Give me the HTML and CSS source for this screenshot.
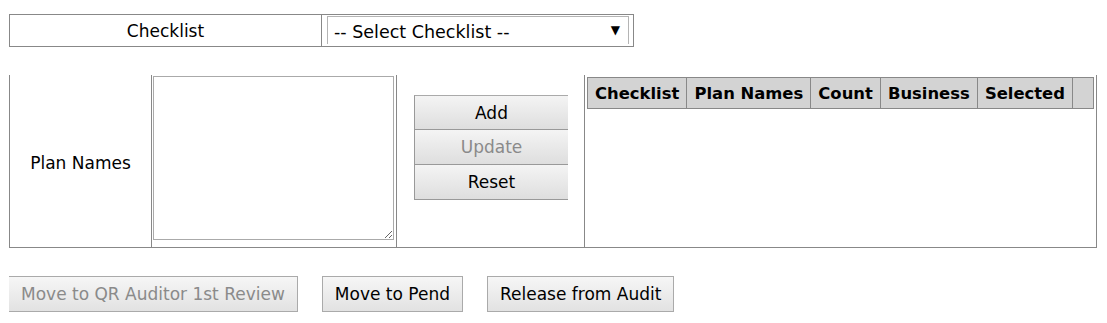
FILE: index.html
```
<!DOCTYPE html>
<html lang="en">
<head>
  <meta charset="UTF-8" />
  <title>Checklist Audit</title>
  <link rel="stylesheet" href="styles.css">
</head>
<body>

  <table class="pick-table">
    <tr>
      <td class="pick-label">Checklist</td>
      <td class="pick-field">
        <div class="select-wrap">
          <select class="checklist-select">
            <option>-- Select Checklist --</option>
          </select>
        </div>
      </td>
    </tr>
  </table>

  <div class="plan-panel">
    <div class="plan-label">Plan Names</div>
    <div class="plan-input">
      <textarea class="plan-text"></textarea>
    </div>
    <div class="plan-actions">
      <button class="stack-btn">Add</button>
      <button class="stack-btn" disabled>Update</button>
      <button class="stack-btn">Reset</button>
    </div>
    <div class="plan-grid">
      <table class="grid-table">
        <tr>
          <th>Checklist</th>
          <th>Plan Names</th>
          <th>Count</th>
          <th>Business</th>
          <th>Selected</th>
          <th class="spacer"></th>
        </tr>
      </table>
    </div>
  </div>

  <div class="footer-actions">
    <button class="action-btn" disabled>Move to QR Auditor 1st Review</button>
    <button class="action-btn">Move to Pend</button>
    <button class="action-btn">Release from Audit</button>
  </div>

</body>
</html>
```

FILE: styles.css
```
body {
  margin: 14px 9px 8px 9px;
  font-family: "DejaVu Sans", Verdana, sans-serif;
  font-size: 17px;
  color: #000;
  background: #fff;
}

.pick-table {
  border-collapse: collapse;
  width: 625px;
}

.pick-table td {
  border: 1px solid #888;
  height: 29px;
  padding: 0;
}

.pick-label {
  width: 311px;
  text-align: center;
  line-height: 27px;
  padding-top: 2px !important;
}

.pick-field {
  padding: 0 4px 0 5px !important;
  vertical-align: top;
}

.select-wrap {
  position: relative;
  margin-top: 1px;
  height: 28px;
}

.select-wrap::after {
  content: "\25BC";
  position: absolute;
  right: 9px;
  top: 7px;
  font-size: 12px;
  line-height: 14px;
  pointer-events: none;
}

.checklist-select {
  appearance: none;
  -webkit-appearance: none;
  display: block;
  width: 302px;
  height: 28px;
  border: 1px solid #b4b4b4;
  border-bottom: none;
  border-radius: 0;
  background: #fff;
  font-family: inherit;
  font-size: 17.5px;
  padding: 2px 0 0 6px;
  color: #000;
}

.plan-panel {
  display: grid;
  grid-template-columns: 142px 245px 188px 513px;
  margin-top: 28px;
  width: 1088px;
  height: 173px;
  border-left: 1px solid #888;
  border-right: 1px solid #888;
  border-bottom: 1px solid #888;
  box-sizing: border-box;
}

.plan-label {
  display: flex;
  align-items: center;
  justify-content: center;
  padding-top: 4px;
  border-right: 1px solid #888;
}

.plan-input {
  border-right: 1px solid #888;
  padding: 1px 0 0 1px;
}

.plan-text {
  display: block;
  width: 241px;
  height: 164px;
  box-sizing: border-box;
  border: 1px solid #aaa;
  margin: 0;
  resize: both;
}

.plan-actions {
  display: flex;
  flex-direction: column;
  padding: 20px 0 0 17px;
  border-right: 1px solid #888;
}

.stack-btn {
  width: 154px;
  height: 35px;
  margin: 0;
  font-family: inherit;
  font-size: 17px;
  color: #000;
  border: 1px solid #999;
  border-right: none;
  border-top-color: #aaa;
  background: linear-gradient(#f4f4f4, #dedede);
  border-radius: 0;
  padding: 0;
}

.stack-btn + .stack-btn {
  border-top: none;
}

.stack-btn:disabled,
.action-btn:disabled {
  color: #8a8a8a;
}

.plan-grid {
  padding: 2px 3px 0 2px;
}

.grid-table {
  border-collapse: collapse;
  width: 507px;
}

.grid-table th {
  background: #d3d3d3;
  border: 1px solid #888;
  height: 30px;
  padding: 0 7px;
  font-size: 16.4px;
  font-weight: bold;
  white-space: nowrap;
}

.grid-table .spacer {
  width: 6px;
}

.footer-actions {
  display: flex;
  gap: 24px;
  margin-top: 28px;
  margin-left: -1px;
}

.action-btn {
  height: 36px;
  margin: 0;
  padding: 0 12px;
  font-family: inherit;
  font-size: 17px;
  color: #000;
  border: 1px solid #aaa;
  border-radius: 0;
  background: linear-gradient(#f6f6f6, #e2e2e2);
}
```
